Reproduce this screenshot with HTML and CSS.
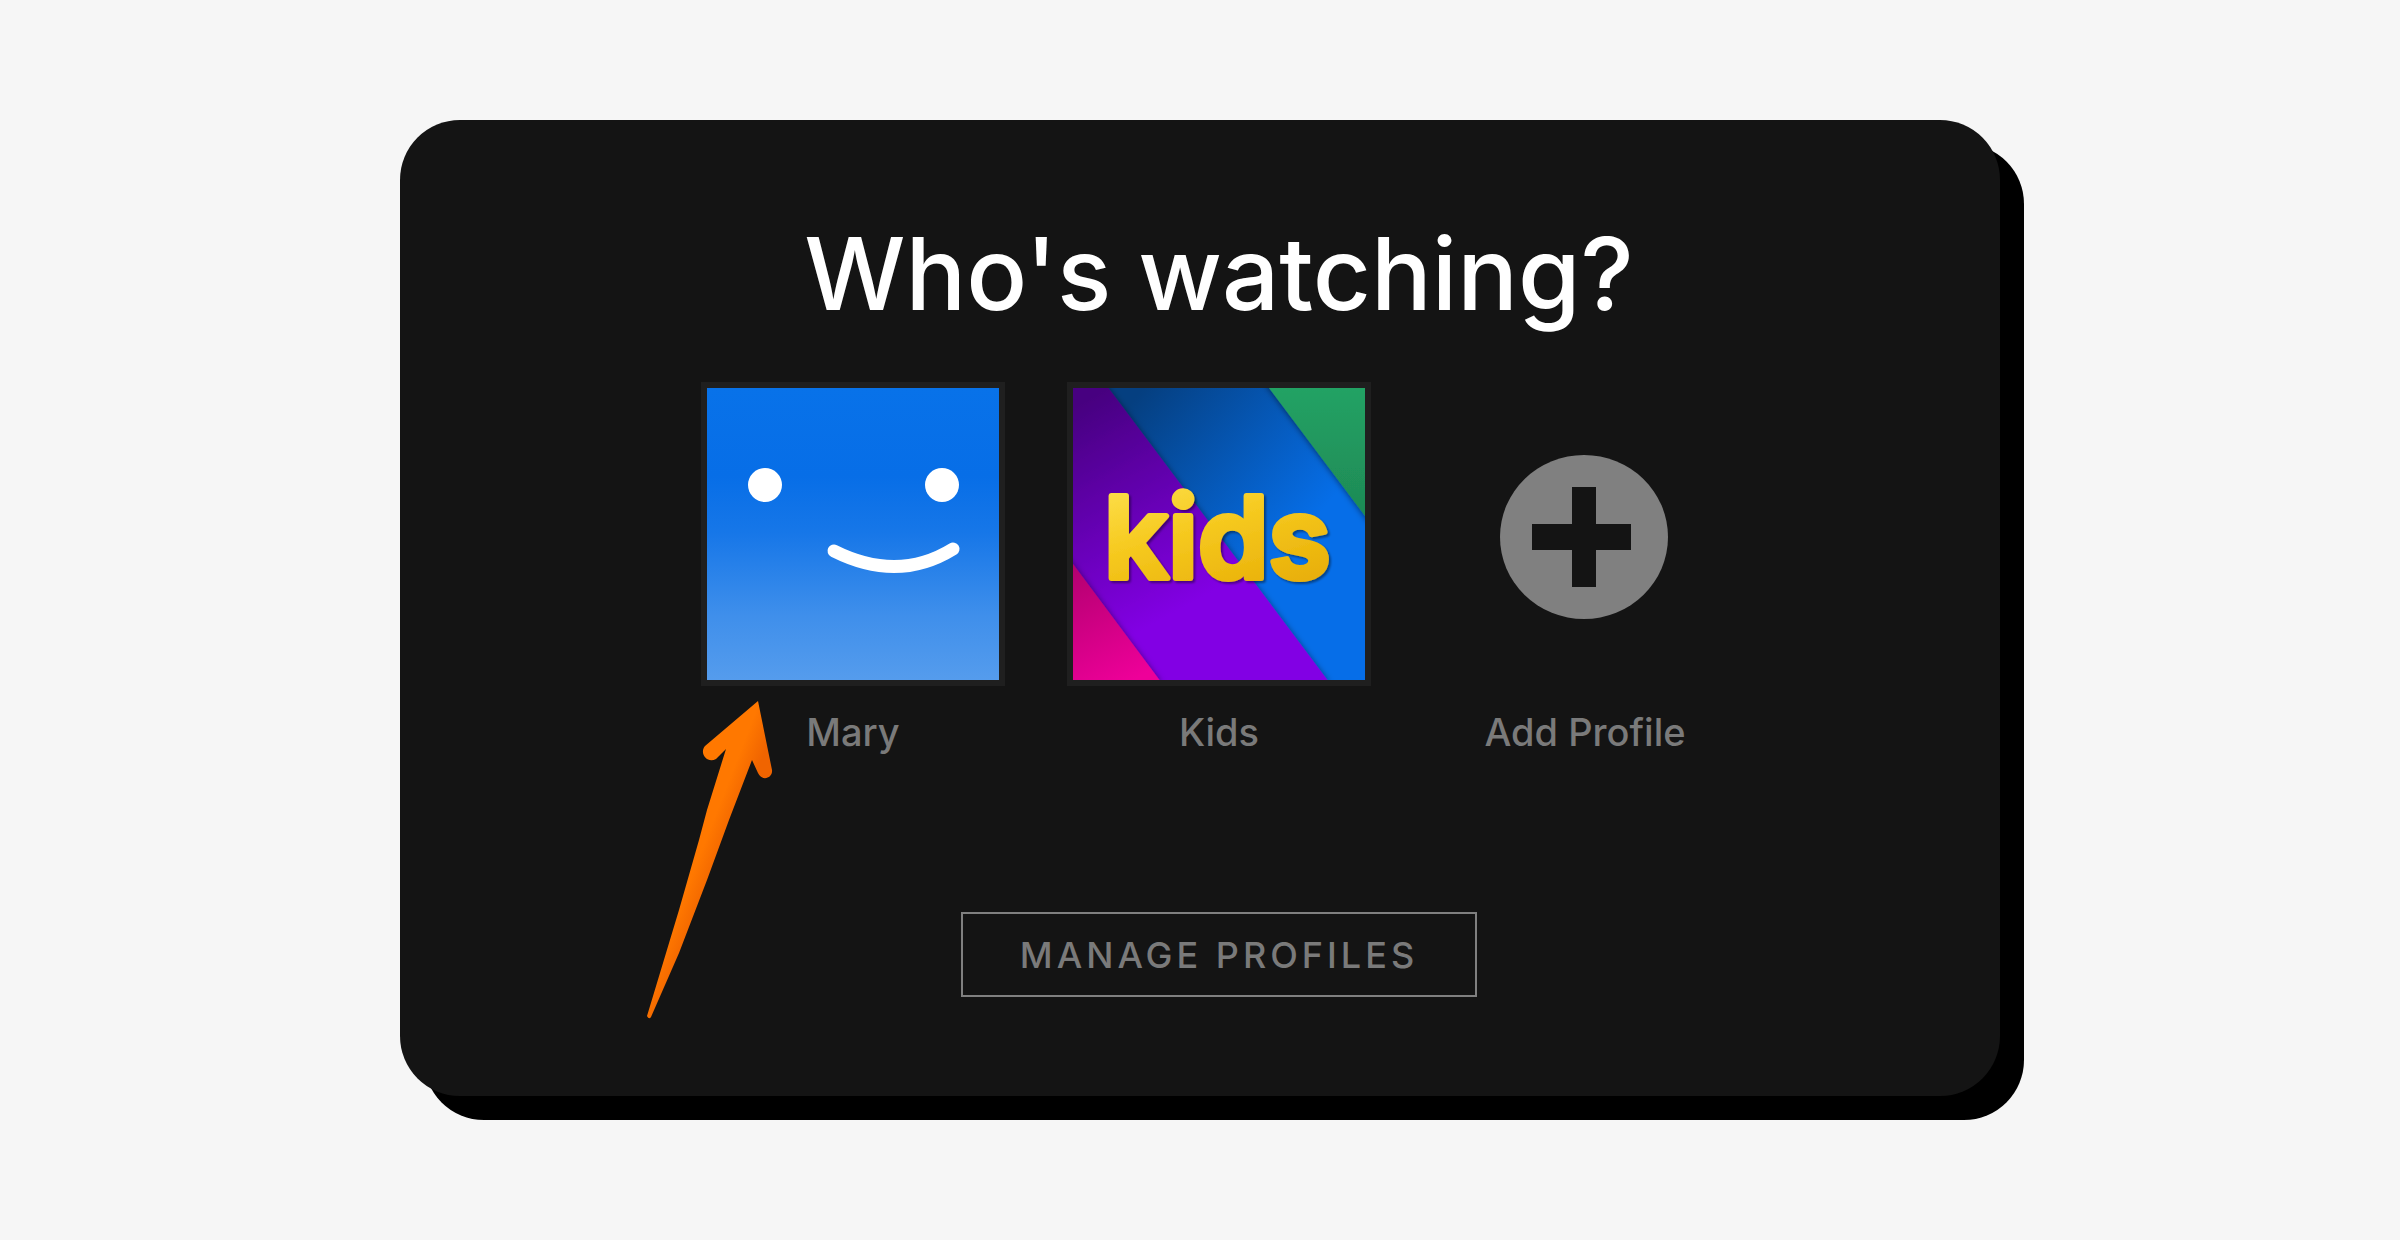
FILE: index.html
```html
<!DOCTYPE html>
<html lang="en">
<head>
<meta charset="utf-8">
<meta name="viewport" content="width=device-width, initial-scale=1">
<title>Who's watching?</title>
<link rel="stylesheet" href="styles.css">
</head>
<body>
<main class="card">
  <h1 class="title">Who's watching?</h1>
  <ul class="profiles">
    <li>
      <a class="profile" href="#mary">
        <svg class="avatar" viewBox="0 0 292 292" aria-hidden="true">
          <defs>
            <linearGradient id="sky" x1="0" y1="0" x2="0" y2="1">
              <stop offset="0" stop-color="#0872e9"/>
              <stop offset=".3" stop-color="#076ee7"/>
              <stop offset=".5" stop-color="#1777e8"/>
              <stop offset=".78" stop-color="#3f8feb"/>
              <stop offset="1" stop-color="#559ced"/>
            </linearGradient>
          </defs>
          <rect width="292" height="292" fill="url(#sky)"/>
          <circle cx="58" cy="97" r="17" fill="#fff"/>
          <circle cx="235" cy="97" r="17" fill="#fff"/>
          <path d="M127 163Q191 195 246 161" fill="none" stroke="#fff" stroke-width="13" stroke-linecap="round"/>
        </svg>
        <span class="name">Mary</span>
      </a>
      <svg class="arrow" viewBox="0 0 128 320" aria-hidden="true">
        <defs>
          <linearGradient id="flame" gradientUnits="userSpaceOnUse" x1="62" y1="110" x2="98" y2="124">
            <stop offset=".2" stop-color="#ff7800"/>
            <stop offset=".8" stop-color="#f06400"/>
          </linearGradient>
        </defs>
        <path d="M111 1L58 46C52 53 60 64 69 59L79 49L60 110L52 140L32 210L0 316Q2 320 4 317L32 253L60 180L82 120L105 60L111 73C115 82 126 78 125 70Z" fill="url(#flame)"/>
      </svg>
    </li>
    <li>
      <a class="profile" href="#kids">
        <svg class="avatar" viewBox="0 0 292 292" aria-hidden="true">
          <defs>
            <linearGradient id="blue" x1="0" y1="0" x2=".7" y2=".6">
              <stop offset=".2" stop-color="#053f80"/>
              <stop offset="1" stop-color="#066ee8"/>
            </linearGradient>
            <linearGradient id="purple" gradientUnits="userSpaceOnUse" x1="0" y1="20" x2="110" y2="220">
              <stop offset="0" stop-color="#470080"/>
              <stop offset="1" stop-color="#8205e4"/>
            </linearGradient>
            <linearGradient id="pink" gradientUnits="userSpaceOnUse" x1="0" y1="180" x2="60" y2="292">
              <stop offset="0" stop-color="#b30070"/>
              <stop offset="1" stop-color="#ee0599"/>
            </linearGradient>
            <linearGradient id="green" x1="0" y1="0" x2="0" y2="1">
              <stop offset="0" stop-color="#24a667"/>
              <stop offset="1" stop-color="#1d8552"/>
            </linearGradient>
            <linearGradient id="gold" x1="0" y1="0" x2=".5" y2="1">
              <stop offset="0" stop-color="#ffe556"/>
              <stop offset=".5" stop-color="#f6ca20"/>
              <stop offset="1" stop-color="#e9b008"/>
            </linearGradient>
            <filter id="edge" x="-20%" y="-20%" width="140%" height="140%">
              <feDropShadow dx="0" dy="1" stdDeviation="3" flood-color="#000" flood-opacity=".5"/>
            </filter>
            <filter id="lift" x="-10%" y="-10%" width="120%" height="130%">
              <feDropShadow dx="2" dy="2" stdDeviation="1" flood-color="#000" flood-opacity=".4"/>
            </filter>
          </defs>
          <rect width="292" height="292" fill="url(#blue)"/>
          <path d="M-20 -74L34 -2L256 294L-20 294Z" fill="url(#purple)" filter="url(#edge)"/>
          <path d="M-20 149L0 176L88 294L-20 310Z" fill="url(#pink)" filter="url(#edge)"/>
          <path d="M182 -20L196 0L292 128L310 152L310 -20Z" fill="url(#green)" filter="url(#edge)"/>
          <text class="kids-logo" x="31" y="190" fill="url(#gold)" stroke="url(#gold)" filter="url(#lift)">kids</text>
        </svg>
        <span class="name">Kids</span>
      </a>
    </li>
    <li>
      <a class="profile" href="#add">
        <svg class="avatar add" viewBox="0 0 292 292" aria-hidden="true">
          <ellipse cx="145" cy="149" rx="84" ry="82" fill="#808080"/>
          <path d="M133 99h24v37h35v26h-35v37h-24v-37H93v-26h40z" fill="#141414"/>
        </svg>
        <span class="name">Add Profile</span>
      </a>
    </li>
  </ul>
  <button class="manage" type="button">MANAGE PROFILES</button>
</main>
</body>
</html>
```
FILE: styles.css
```css
* {
  box-sizing: border-box;
}

body {
  margin: 0;
  min-height: 100vh;
  padding: 120px 24px;
  background: #f6f6f6;
  font-family: Inter, "Liberation Sans", sans-serif;
}

.card {
  display: flex;
  flex-direction: column;
  align-items: center;
  width: 100%;
  max-width: 1600px;
  margin: 0 auto;
  padding: 90px 0 99px 38px;
  border-radius: 60px;
  background: #141414;
  box-shadow: 24px 24px 0 #000;
}

.title {
  margin: 0 0 46px;
  color: #fff;
  font-size: 101px;
  font-weight: 500;
  line-height: 126px;
}

.profiles {
  display: flex;
  gap: 62px;
  margin: 0 0 152px;
  padding: 0;
  list-style: none;
}

.profiles li {
  position: relative;
}

.profile {
  display: flex;
  flex-direction: column;
  align-items: center;
  gap: 18px;
  width: 304px;
  color: #7a7a7a;
  text-decoration: none;
}

.avatar {
  width: 304px;
  height: 304px;
  border: 6px solid #1f1f1f;
}

.add {
  border-color: transparent;
}

.kids-logo {
  font-size: 113px;
  font-weight: 600;
  stroke-width: 6px;
  stroke-linejoin: round;
}

.name {
  font-size: 38px;
  font-weight: 500;
  line-height: 56px;
}

.arrow {
  position: absolute;
  top: 318px;
  left: -54px;
  width: 128px;
  height: 320px;
}

.manage {
  padding: 21px 57px 19px;
  border: 2px solid #808080;
  background: transparent;
  color: #7a7a7a;
  font-family: inherit;
  font-size: 36px;
  font-weight: 500;
  letter-spacing: 4px;
  line-height: 41px;
}
```
